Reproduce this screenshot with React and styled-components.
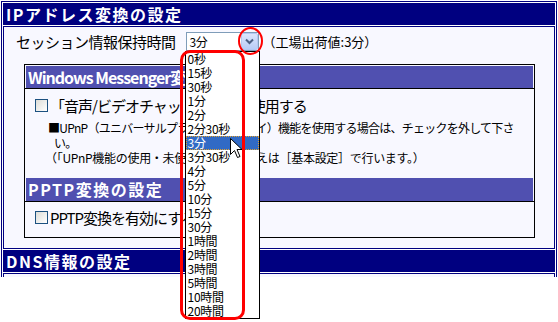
import React from 'react';
import styled, { createGlobalStyle } from 'styled-components';

const GlobalStyle = createGlobalStyle`
  html, body {
    margin: 0;
    padding: 0;
    background: #fff;
  }
  body {
    font-family: "Noto Sans CJK JP", "Noto Sans", sans-serif;
    color: #000;
  }
`;

const Page = styled.div`
  height: 322px;
  overflow: visible;
`;

const Frame = styled.div`
  margin: 1px 0 0 1px;
  width: 556px;
  box-sizing: border-box;
  border: 1px solid #000080;
  border-bottom: none;
  padding: 1px 1px 0;
`;

const SectionHeader = styled.div`
  height: 22px;
  line-height: 22px;
  background: #000080;
  color: #fff;
  font-size: 16px;
  font-weight: 700;
  letter-spacing: 1.5px;
  padding-left: 3px;
  margin-bottom: 1px;
  white-space: nowrap;
`;

const SectionBody = styled.div`
  border: 1px solid #000080;
  border-bottom: ${(p) => (p.$tail ? 'none' : '1px solid #000080')};
  background: #f8f8ff;
  padding: ${(p) => (p.$tail ? '0' : '5px 0 10px')};
  height: ${(p) => (p.$tail ? '3px' : 'auto')};
  margin-bottom: 1px;
`;

const SettingRow = styled.div`
  display: flex;
  align-items: center;
  height: 19px;
  padding-left: 12px;
`;

const Label = styled.span`
  font-size: 15px;
  letter-spacing: -0.5px;
  margin-right: 10px;
  white-space: nowrap;
`;

const SelectWrap = styled.div`
  position: relative;
  width: 73px;
  height: 19px;
  box-sizing: border-box;
  border: 1px solid #7f9db9;
  background: #fff;
  display: flex;
  align-items: center;
`;

const SelectValue = styled.span`
  flex: 1;
  font-size: 12px;
  letter-spacing: -0.5px;
  padding-left: 3px;
`;

const ArrowButton = styled.span`
  width: 17px;
  height: 17px;
  box-sizing: border-box;
  border: 1px solid #b5c8f2;
  border-radius: 2px;
  background: linear-gradient(#dce6fd, #b8ccf6);
  display: flex;
  align-items: center;
  justify-content: center;
`;

const Note = styled.span`
  font-size: 13px;
  letter-spacing: 0;
  margin-left: 4px;
  white-space: nowrap;
`;

const Dropdown = styled.ul`
  position: absolute;
  top: 18px;
  left: -2px;
  width: 75px;
  box-sizing: border-box;
  margin: 0;
  padding: 0;
  list-style: none;
  border: 1px solid #000;
  background: #fff;
  z-index: 5;
`;

const Option = styled.li`
  height: 14px;
  line-height: 14px;
  font-size: 12px;
  letter-spacing: -0.3px;
  padding-left: 2px;
  white-space: nowrap;
  background: ${(p) => (p.$selected ? '#316ac5' : 'transparent')};
  color: ${(p) => (p.$selected ? '#fff' : '#000')};
  outline: ${(p) => (p.$selected ? '1px dotted #e0a030' : 'none')};
  outline-offset: -1px;
`;

const RedBox = styled.div`
  position: absolute;
  left: -7px;
  top: 17px;
  width: 65px;
  height: 270px;
  box-sizing: border-box;
  border: 3px solid #ff0000;
  border-radius: 10px;
  pointer-events: none;
  z-index: 6;
`;

const RedRing = styled.div`
  position: absolute;
  left: 51px;
  top: -6px;
  width: 25px;
  height: 28px;
  box-sizing: border-box;
  border: 2px solid #ff0000;
  border-radius: 50%;
  pointer-events: none;
  z-index: 6;
`;

const Cursor = styled.svg`
  position: absolute;
  left: 43px;
  top: 105px;
  z-index: 7;
`;

const InnerBox = styled.div`
  margin: 13px 19px 0 20px;
  border: 1px solid #000;
  background: #f8f8ff;
`;

const InnerHeader = styled.div`
  margin: ${(p) => (p.$first ? '1px 1px 0' : '0 1px')};
  height: ${(p) => (p.$first ? '22px' : '23px')};
  line-height: ${(p) => (p.$first ? '22px' : '23px')};
  background: #5050b0;
  color: #fff;
  font-size: 16px;
  font-weight: 700;
  letter-spacing: 1.5px;
  padding-left: 2px;
  white-space: nowrap;
`;

const Latin = styled.span`
  letter-spacing: -1px;
`;

const InnerBody = styled.div`
  border-top: 1px solid #000;
`;

const CheckRow = styled.div`
  display: flex;
  align-items: center;
  height: 20px;
  padding-left: 10px;
  margin-top: ${(p) => p.$top || 0}px;
  margin-bottom: ${(p) => p.$bottom || 0}px;
`;

const Checkbox = styled.span`
  width: 13px;
  height: 13px;
  box-sizing: border-box;
  border: 1px solid #1c5180;
  background: linear-gradient(135deg, #dcdcd7, #ffffff);
  margin-right: 2px;
  flex: none;
`;

const CheckLabel = styled.span`
  font-size: 15px;
  letter-spacing: -1px;
  white-space: nowrap;
`;

const Notes = styled.div`
  margin: 5px 10px 13px 23px;
  font-size: 12px;
  line-height: 15px;
`;

const NoteLine = styled.div`
  padding-left: ${(p) => (p.$hang ? '6px' : '0')};
  text-indent: ${(p) => (p.$hang ? '-6px' : '0')};
  margin-left: ${(p) => (p.$hang ? '0' : '-3px')};
  letter-spacing: ${(p) => (p.$hang ? '-0.75px' : '-0.3px')};
`;

const options = [
  '0秒', '15秒', '30秒', '1分', '2分', '2分30秒', '3分', '3分30秒', '4分', '5分',
  '10分', '15分', '30分', '1時間', '2時間', '3時間', '5時間', '10時間', '20時間',
];

const Chevron = () => (
  <svg width="9" height="7" viewBox="0 0 9 7">
    <polyline points="1,1.5 4.5,5 8,1.5" fill="none" stroke="#4d6185" strokeWidth="2" />
  </svg>
);

const Select = ({ value }) => (
  <SelectWrap>
    <SelectValue>{value}</SelectValue>
    <ArrowButton>
      <Chevron />
    </ArrowButton>
    <Dropdown>
      {options.map((o) => (
        <Option key={o} $selected={o === value}>{o}</Option>
      ))}
    </Dropdown>
    <RedBox />
    <RedRing />
    <Cursor width="13" height="21" viewBox="0 0 13 21">
      <path d="M0.5 0.5 L0.5 16.5 L4.5 12.5 L7.5 19.5 L10 18.5 L7 11.5 L12 11.5 Z" fill="#fff" stroke="#000" strokeWidth="1" />
    </Cursor>
  </SelectWrap>
);

export default function App() {
  return (
    <Page>
      <GlobalStyle />
      <Frame>
        <SectionHeader>IPアドレス変換の設定</SectionHeader>
        <SectionBody>
          <SettingRow>
            <Label>セッション情報保持時間</Label>
            <Select value="3分" />
            <Note>（工場出荷値:3分）</Note>
          </SettingRow>
          <InnerBox>
            <InnerHeader $first>
              <Latin>Windows Messenger</Latin>変換の設定
            </InnerHeader>
            <InnerBody>
              <CheckRow $top={6}>
                <Checkbox />
                <CheckLabel>「音声/ビデオチャット」機能を使用する</CheckLabel>
              </CheckRow>
              <Notes>
                <NoteLine $hang>■UPnP（ユニバーサルプラグアンドプレイ）機能を使用する場合は、チェックを外して下さい。</NoteLine>
                <NoteLine>（「UPnP機能の使用・未使用」の切り替えは［基本設定］で行います。）</NoteLine>
              </Notes>
            </InnerBody>
            <InnerHeader>PPTP変換の設定</InnerHeader>
            <InnerBody>
              <CheckRow $top={5} $bottom={10}>
                <Checkbox />
                <CheckLabel>PPTP変換を有効にする</CheckLabel>
              </CheckRow>
            </InnerBody>
          </InnerBox>
        </SectionBody>
        <SectionHeader>DNS情報の設定</SectionHeader>
        <SectionBody $tail />
      </Frame>
    </Page>
  );
}
